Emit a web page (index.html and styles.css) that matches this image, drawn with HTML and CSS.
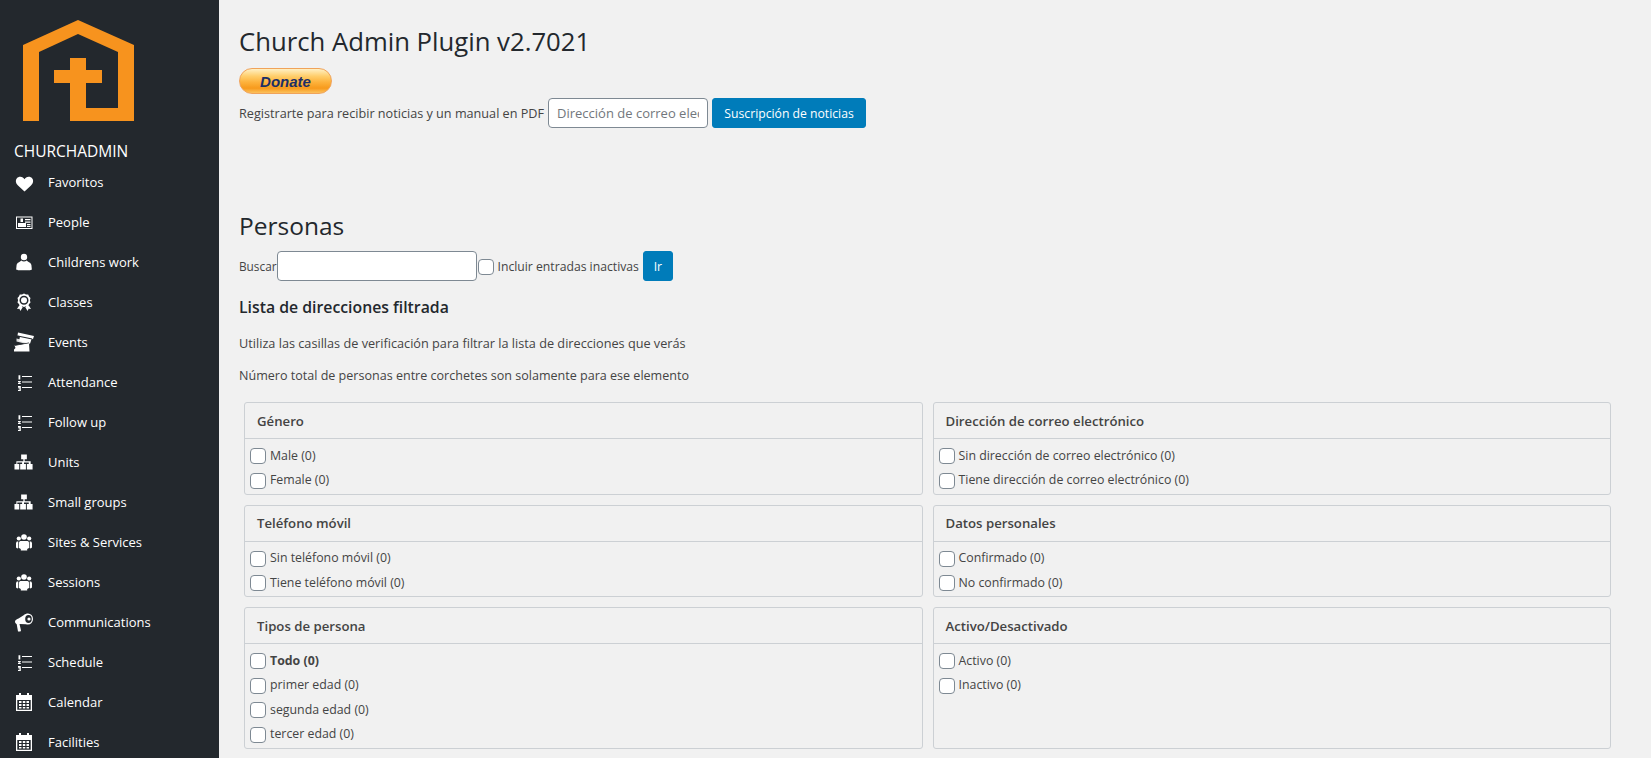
FILE: index.html
```html
<!DOCTYPE html>
<html lang="es">
<head>
<meta charset="utf-8">
<title>Church Admin Plugin</title>
<link rel="stylesheet" href="styles.css">
</head>
<body>
<svg class="sprite" width="0" height="0" aria-hidden="true">
  <symbol id="i-heart" viewBox="0 0 20 20"><path d="M10.500 19.500 4 13.500C1.500 11 1.600 8.500 2.400 7 3.500 5 5 4.700 6.300 4.700c2 0 3.300 1 4.200 2.500.9-1.500 2.200-2.500 4.200-2.500 1.300 0 2.800.3 3.900 2.300.8 1.500.9 4-1.600 6.500z" fill="#fff"/></symbol>
  <symbol id="i-card" viewBox="0 0 20 20"><path fill="#fff" fill-rule="evenodd" d="M2 4.500h16.500V17H2zM3 5.500V16h14.500V5.500z"/><path fill="#fff" d="M6.500 6.500h2.500v3.500H6.500zM4 11h8v4H4zM11 7h5.500v1.300H11zM11 9.500h5.500v1.300H11zM13 12h3.500v1.300H13zM13 14h3.500v1H13z"/></symbol>
  <symbol id="i-user" viewBox="0 0 20 20"><circle cx="10" cy="5" r="3.200" fill="#fff"/><path fill="#fff" d="M7.300 8.500C6 10 3 10.500 2.600 13l-.4 4c0 .8 1 1.200 2 1.200h11.800c1 0 1.900-.4 1.800-1.200l-.4-4c-.4-2.500-3.400-3-4.700-4.500-1.500 1.200-4 1.200-5.400 0z"/></symbol>
  <symbol id="i-award" viewBox="0 0 20 20"><path fill="#fff" fill-rule="evenodd" d="M10 1.500l2 .9 2.200.1.900 2 1.400 1.600-.6 2.200.6 2.100-1.400 1.700-.9 2-2.200.1-2 .9-2-.9-2.200-.1-.9-2-1.400-1.700.6-2.100-.6-2.200 1.400-1.600.9-2 2.200-.1zM10 3.700a4.500 4.500 0 100 9 4.500 4.500 0 000-9z"/><circle cx="10" cy="8.200" r="3" fill="#fff"/><path fill="#fff" d="M5.200 13.500l2.500.6 1 1.200-2.300 3.700-1-2.200-2.400.1zM14.800 13.500l-2.500.6-1 1.200 2.300 3.700 1-2.200 2.400.1z"/></symbol>
  <symbol id="i-ticket" viewBox="0 0 20 20"><path fill="#fff" d="M4 .5l16 3.500-1 3-1.500.2-1.500 4.500-11-2.700L6 4.500 3.500 3.500z"/><path fill="#23282d" d="M3.800 3.400l14.500 3.200-.3 1-14.500-3.200z"/><path fill="#fff" d="M2.500 6.500l12 3 .5 1.500-.5 1.500-12-3z" opacity=".85"/><path fill="#fff" d="M.5 13.500l14.500-2.500.5 8.500H0v-2l1.500-1.500z"/><path fill="#23282d" d="M1 13l14-2.500.1.800-14 2.500z"/></symbol>
  <symbol id="i-list" viewBox="0 0 20 20"><g fill="#fff"><path d="M4.500 3.200h1.800v4.300H4.500zM8 4h10v1H8zM8 9.500h10v1H8zM8 15h10v1H8z"/><path d="M4 9h2.800v1H5.200l1.600 1v1H4v-1h1.500L4 10zM4 14h2.800v5H4v-1h1.600v-.8H4.400v-.7h1.200v-.7H4z"/></g></symbol>
  <symbol id="i-sitemap" viewBox="0 0 21 20"><path fill="#fff" d="M7.500 2h6v5h-2.300v2.200h6.300V12h2v6h-6v-6h2v-1.600h-5V12h2v6h-6v-6h2v-1.600h-5V12h2v6H.5v-6h2V9.200h7.300V7H7.500z"/></symbol>
  <symbol id="i-group" viewBox="0 0 20 20"><g fill="#fff"><circle cx="10" cy="5" r="2.800"/><circle cx="4.800" cy="6.500" r="2.100"/><circle cx="15.200" cy="6.500" r="2.100"/><path d="M6.500 9h7c1 0 1.500 1 1.500 2v5l-1.800 1v1.500H6.800V17L5 16v-5c0-1 .5-2 1.500-2z"/><path d="M2.800 9.500h1.500v6.500l-1 .5L2 15.500v-4.500zM17.200 9.500h-1.500v6.500l1 .5 1.300-1v-4.500z"/></g></symbol>
  <symbol id="i-horn" viewBox="0 0 20 20"><path fill="#fff" fill-rule="evenodd" d="M14 1.500a5 5.500 0 110 11c-1 0-2-.3-2-.3L5.500 12l1.500 6.500-.6 1H4l-1.300-7.300C1.500 11.500 1 10.500 1 9.500 1 8 3 7 4.500 6.500L10 3c1-1 2.500-1.500 4-1.500zM14.500 3a3.300 4 0 100 8 3.300 4 0 000-8z"/><circle cx="15" cy="7" r="1.600" fill="#fff"/></symbol>
  <symbol id="i-cal" viewBox="0 0 20 20"><path fill="#fff" fill-rule="evenodd" d="M2 3h3V1h2v2h6V1h2v2h3v16H2zM3.300 8v9.700h13.400V8z"/><path fill="#fff" d="M5 9h2.500v2H5zM8.800 9h2.500v2H8.800zM12.500 9H15v2h-2.500zM5 12h2.500v2H5zM8.800 12h2.500v2H8.800zM12.500 12H15v2h-2.500zM5 15h2.500v1.500H5zM8.800 15h2.500v1.500H8.800zM12.500 15H15v1.500h-2.500z"/></symbol>
</svg>

<div class="layout">
  <aside class="sidebar">
    <svg class="logo" width="152" height="121" viewBox="0 0 152 121" aria-hidden="true">
      <path fill="#f7931e" d="M78 20 134 45V121H70V83H54V70H70V58H86V70H102V83H86V108H118V52L78 34 39 52V121H23V45Z"/>
    </svg>
    <div class="brand">CHURCHADMIN</div>
    <nav class="nav">
      <a class="nav-item"><svg class="nav-icon"><use href="#i-heart"/></svg><span>Favoritos</span></a>
      <a class="nav-item"><svg class="nav-icon"><use href="#i-card"/></svg><span>People</span></a>
      <a class="nav-item"><svg class="nav-icon"><use href="#i-user"/></svg><span>Childrens work</span></a>
      <a class="nav-item"><svg class="nav-icon"><use href="#i-award"/></svg><span>Classes</span></a>
      <a class="nav-item"><svg class="nav-icon"><use href="#i-ticket"/></svg><span>Events</span></a>
      <a class="nav-item"><svg class="nav-icon"><use href="#i-list"/></svg><span>Attendance</span></a>
      <a class="nav-item"><svg class="nav-icon"><use href="#i-list"/></svg><span>Follow up</span></a>
      <a class="nav-item"><svg class="nav-icon"><use href="#i-sitemap"/></svg><span>Units</span></a>
      <a class="nav-item"><svg class="nav-icon"><use href="#i-sitemap"/></svg><span>Small groups</span></a>
      <a class="nav-item"><svg class="nav-icon"><use href="#i-group"/></svg><span>Sites &amp; Services</span></a>
      <a class="nav-item"><svg class="nav-icon"><use href="#i-group"/></svg><span>Sessions</span></a>
      <a class="nav-item"><svg class="nav-icon"><use href="#i-horn"/></svg><span>Communications</span></a>
      <a class="nav-item"><svg class="nav-icon"><use href="#i-list"/></svg><span>Schedule</span></a>
      <a class="nav-item"><svg class="nav-icon"><use href="#i-cal"/></svg><span>Calendar</span></a>
      <a class="nav-item"><svg class="nav-icon"><use href="#i-cal"/></svg><span>Facilities</span></a>
    </nav>
  </aside>

  <main class="main">
    <h1 class="title">Church Admin Plugin v2.7021</h1>
    <div class="donate"><span>Donate</span></div>
    <form class="signup">
      <label class="signup-label">Registrarte para recibir noticias y un manual en PDF</label>
      <input class="text-input signup-input" type="text" placeholder="Dirección de correo electrónico">
      <button class="btn signup-btn" type="button">Suscripción de noticias</button>
    </form>

    <h2 class="section-title">Personas</h2>
    <form class="search">
      <label class="search-label buscar">Buscar</label>
      <input class="text-input search-input" type="text">
      <input class="check search-check" type="checkbox">
      <label class="search-label">Incluir entradas inactivas</label>
      <button class="btn go-btn" type="button">Ir</button>
    </form>
    <h3 class="sub-title">Lista de direcciones filtrada</h3>
    <p class="note first">Utiliza las casillas de verificación para filtrar la lista de direcciones que verás</p>
    <p class="note second">Número total de personas entre corchetes son solamente para ese elemento</p>

    <div class="cards">
      <section class="card">
        <h4 class="card-head">Género</h4>
        <div class="card-body">
          <label class="row"><input class="check" type="checkbox">Male (0)</label>
          <label class="row"><input class="check" type="checkbox">Female (0)</label>
        </div>
      </section>
      <section class="card">
        <h4 class="card-head">Dirección de correo electrónico</h4>
        <div class="card-body">
          <label class="row"><input class="check" type="checkbox">Sin dirección de correo electrónico (0)</label>
          <label class="row"><input class="check" type="checkbox">Tiene dirección de correo electrónico (0)</label>
        </div>
      </section>
      <section class="card">
        <h4 class="card-head">Teléfono móvil</h4>
        <div class="card-body">
          <label class="row"><input class="check" type="checkbox">Sin teléfono móvil (0)</label>
          <label class="row"><input class="check" type="checkbox">Tiene teléfono móvil (0)</label>
        </div>
      </section>
      <section class="card">
        <h4 class="card-head">Datos personales</h4>
        <div class="card-body">
          <label class="row"><input class="check" type="checkbox">Confirmado (0)</label>
          <label class="row"><input class="check" type="checkbox">No confirmado (0)</label>
        </div>
      </section>
      <section class="card">
        <h4 class="card-head">Tipos de persona</h4>
        <div class="card-body">
          <label class="row strong"><input class="check" type="checkbox">Todo (0)</label>
          <label class="row"><input class="check" type="checkbox">primer edad (0)</label>
          <label class="row"><input class="check" type="checkbox">segunda edad (0)</label>
          <label class="row"><input class="check" type="checkbox">tercer edad (0)</label>
        </div>
      </section>
      <section class="card">
        <h4 class="card-head">Activo/Desactivado</h4>
        <div class="card-body">
          <label class="row"><input class="check" type="checkbox">Activo (0)</label>
          <label class="row"><input class="check" type="checkbox">Inactivo (0)</label>
        </div>
      </section>
    </div>
  </main>
</div>
</body>
</html>
```

FILE: styles.css
```css
* { box-sizing: border-box; }
html, body { margin: 0; height: 100%; overflow: hidden; }
body {
  background: #f1f1f1;
  color: #444;
  font-family: "Open Sans", "Noto Sans", "Liberation Sans", sans-serif;
  font-size: 12.5px;
}
.sprite { position: absolute; }
.layout { display: flex; height: 758px; overflow: hidden; }

.sidebar { flex: 0 0 219px; background: #23282d; color: #fff; overflow: hidden; }
.logo { display: block; }
.brand { margin: 20px 0 0 14px; font-size: 15.5px; line-height: 20px; font-weight: 500; }
.nav { margin-top: 1px; }
.nav-item { display: flex; align-items: center; height: 40px; padding-left: 14px; font-size: 13px; color: #fff; }
.nav-icon { width: 20px; height: 20px; margin-right: 14px; flex: none; }

.main { flex: 1; padding: 0 40px 0 20px; min-width: 0; }
.title { margin: 27px 0 0; color: #23282d; font-size: 25.7px; font-weight: 500; line-height: 30px; }
.donate {
  display: flex; align-items: center; justify-content: center;
  width: 93px; height: 26px; margin-top: 11px;
  border: 1px solid #f0a35a; border-radius: 13px;
  background: linear-gradient(#fff0c4 0%, #ffce6b 30%, #fdb23c 55%, #f79a1c 80%, #fcc25e 100%);
  color: #1c2f66;
  font: italic bold 15px "Liberation Sans", sans-serif;
}
.signup { display: flex; align-items: center; margin-top: 4px; height: 30px; }
.signup-label { color: #444; font-weight: 500; font-size: 12.65px; margin-right: 4px; white-space: nowrap; }
.text-input { height: 30px; border: 1px solid #7e8993; border-radius: 4px; background: #fff; padding: 0 8px; font: inherit; font-size: 13px; color: #32373c; }
.text-input::placeholder { color: #72777c; opacity: 1; }
.signup-input { width: 160px; }
.btn { height: 30px; border: 1px solid #007cba; border-radius: 3px; background: #007cba; color: #fff; font: inherit; font-size: 12.2px; padding: 0; }
.signup-btn { width: 154px; margin-left: 4px; }

.section-title { margin: 82px 0 0; color: #23282d; font-size: 24.5px; font-weight: 500; line-height: 32px; }
.search { display: flex; align-items: center; height: 30px; margin-top: 9px; }
.search-label { white-space: nowrap; font-size: 12.2px; }
.buscar { flex: 0 0 37px; font-size: 11.8px; }
.search-input { width: 200px; }
.check { appearance: none; flex: none; width: 16px; height: 16px; margin: 2px 4px 0 0; border: 1px solid #7e8993; border-radius: 4px; background: #fff; }
.search-check { margin-left: 1px; }
.go-btn { width: 30px; margin-left: 4px; }

.sub-title { margin: 15px 0 0; color: #23282d; font-size: 15.8px; font-weight: 600; line-height: 22px; }
.note { margin: 0; line-height: 20px; font-weight: 500; font-size: 12.7px; }
.note.first { margin-top: 15px; margin-bottom: 13px; }
.note.second { font-size: 12.55px; }

.cards { display: grid; grid-template-columns: 1fr 1fr; gap: 10px; margin: 16px 0 0 5px; }
.card { border: 1px solid #ccd0d4; border-radius: 3px; }
.card-head { display: flex; align-items: center; height: 36px; margin: 0; padding: 0 12px; border-bottom: 1px solid #ccd0d4; font-size: 13.2px; font-weight: 600; }
.card-body { padding: 4.5px 5px 1px; }
.row { display: flex; align-items: center; height: 24.5px; padding-bottom: 1px; font-size: 12.35px; white-space: nowrap; }
.strong { font-weight: 700; }
```
